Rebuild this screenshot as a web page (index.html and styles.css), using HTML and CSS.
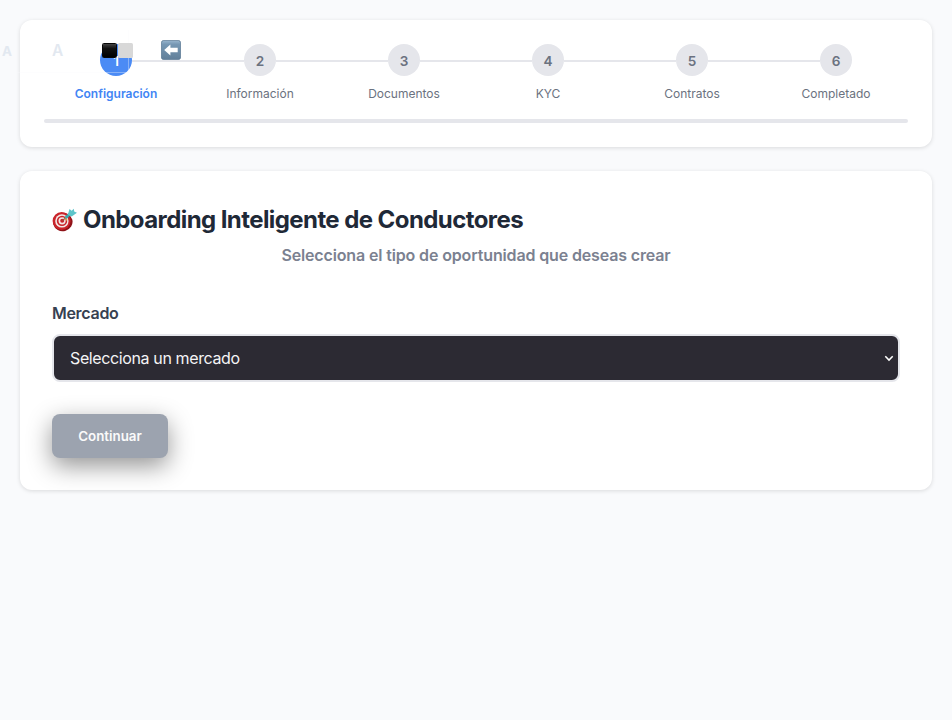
FILE: index.html
```html
<!DOCTYPE html>
<html lang="es">
<head>
<meta charset="utf-8">
<title>Onboarding Inteligente de Conductores</title>
<link rel="stylesheet" href="styles.css">
</head>
<body>
<main class="page">
  <section class="card progress">
    <ol class="steps">
      <li class="step active"><span class="circle">1</span><span class="label">Configuración</span></li>
      <li class="step"><span class="circle">2</span><span class="label">Información</span></li>
      <li class="step"><span class="circle">3</span><span class="label">Documentos</span></li>
      <li class="step"><span class="circle">4</span><span class="label">KYC</span></li>
      <li class="step"><span class="circle">5</span><span class="label">Contratos</span></li>
      <li class="step"><span class="circle">6</span><span class="label">Completado</span></li>
    </ol>
    <div class="track"></div>
  </section>
  <section class="card form">
    <h1 class="title">
      <svg class="target" viewBox="0 0 25 24" aria-hidden="true">
        <ellipse cx="10.8" cy="14" rx="9.8" ry="9.2" fill="#8f1218" transform="rotate(-15 10.8 14)"/>
        <circle cx="9.6" cy="13" r="9" fill="#c9242a"/>
        <circle cx="9.9" cy="12.9" r="6.7" fill="#f3e9e6"/>
        <circle cx="10" cy="12.9" r="5.2" fill="#c9242a"/>
        <circle cx="10.1" cy="12.8" r="3.6" fill="#f3e9e6"/>
        <circle cx="10.2" cy="12.8" r="2" fill="#c9242a"/>
        <path d="M10.5 12.5 14 9.6" stroke="#8b5d45" stroke-width="1.2"/>
        <path d="M13.5 10 19 5" stroke="#3aa9b1" stroke-width="3"/>
        <path d="M15.8 6.8 17.5 1l2.2 1.8L21.8.8l.4 2.8 2.8 1.2-5.3 3.6Z" fill="#5dc5ca"/>
        <path d="m13 9.3 2.5 2.5-1.3 1.2Z" fill="#dba83c"/>
      </svg><span class="title-text">Onboarding Inteligente de Conductores</span>
    </h1>
    <p class="subtitle">Selecciona el tipo de oportunidad que deseas crear</p>
    <label class="field-label" for="market">Mercado</label>
    <div class="select-wrap">
      <select class="select" id="market"><option>Selecciona un mercado</option></select>
      <svg class="chevron" viewBox="0 0 10 7" aria-hidden="true"><path d="m1.3 1.2 3.7 3.9 3.7-3.9"/></svg>
    </div>
    <button class="continue" type="button">Continuar</button>
  </section>
</main>
<div class="ghost-panel"></div>
<span class="ghost ghost-edge">A</span>
<span class="ghost ghost-inner">A</span>
<span class="tile tile-black"></span>
<span class="tile tile-gray"></span>
<svg class="back" viewBox="0 0 20 20" aria-hidden="true">
  <defs><linearGradient id="back-fill" x1="0" y1="0" x2="0" y2="1"><stop offset="0" stop-color="#9ab7cf"/><stop offset=".2" stop-color="#7798b4"/><stop offset="1" stop-color="#617f99"/></linearGradient></defs>
  <rect x=".4" y=".4" width="19.2" height="19.2" rx="2.4" fill="url(#back-fill)" stroke="#5d7b95" stroke-width=".8"/>
  <path d="M3.2 10 9.4 4.5V7.8h7.3v4.4H9.4v3.3Z" fill="#fff"/>
</svg>
</body>
</html>
```
FILE: styles.css
```css
* {
  box-sizing: border-box;
}

body {
  margin: 0;
  min-height: 720px;
  position: relative;
  background: #f9fafc;
  color: #1f2937;
  font-family: Inter, "Liberation Sans", sans-serif;
  overflow: hidden;
}

.page {
  display: flex;
  flex-direction: column;
  gap: 24px;
  padding: 20px;
}

.card {
  background: #fff;
  border-radius: 12px;
  box-shadow: 0 1px 4px rgba(0, 0, 0, 0.13);
}

.progress {
  height: 127px;
  padding: 24px;
}

.steps {
  display: flex;
  list-style: none;
  margin: 0 0 16px;
  padding: 0;
}

.step {
  flex: 1;
  position: relative;
  display: flex;
  flex-direction: column;
  align-items: center;
  gap: 9px;
  color: #6b7280;
}

.step:not(:last-child)::after {
  content: "";
  position: absolute;
  top: 16px;
  left: calc(50% + 16px);
  width: calc(100% - 32px);
  height: 2px;
  background: #e5e6eb;
}

.circle {
  width: 32px;
  height: 32px;
  border-radius: 50%;
  display: grid;
  place-items: center;
  padding-top: 2px;
  background: #e5e6eb;
  font-size: 13.6px;
  font-weight: 600;
  line-height: 20px;
}

.label {
  font-size: 12px;
  line-height: 18px;
}

.active .circle {
  background: #4b8bf5;
  color: #fff;
}

.active .label {
  color: #4285f4;
  font-weight: 600;
}

.track {
  height: 4px;
  border-radius: 2px;
  background: #e5e6eb;
}

.form {
  height: 319px;
  padding: 32px;
}

.title {
  display: flex;
  align-items: center;
  gap: 6px;
  height: 34px;
  margin: 0 0 6px;
  font-size: 24px;
  font-weight: 700;
  line-height: 34px;
}

.title-text {
  letter-spacing: -0.58px;
}

.target {
  width: 25px;
  height: 24px;
  flex: none;
}

.subtitle {
  margin: 0 0 34px;
  color: #7b8190;
  font-size: 16px;
  font-weight: 600;
  letter-spacing: -0.14px;
  line-height: 24px;
  text-align: center;
}

.field-label {
  display: block;
  margin-bottom: 9px;
  color: #374151;
  font-size: 16px;
  font-weight: 600;
  letter-spacing: -0.3px;
  line-height: 24px;
}

.select-wrap {
  position: relative;
  height: 48px;
  margin-bottom: 32px;
}

.select {
  width: 100%;
  height: 48px;
  appearance: none;
  padding: 0 16px;
  border: 2px solid #e5e6eb;
  border-radius: 8px;
  background: #2c2a33;
  color: #f4f4f6;
  font: 400 16px/24px Inter, "Liberation Sans", sans-serif;
  letter-spacing: -0.38px;
}

.chevron {
  position: absolute;
  top: 21px;
  right: 6px;
  width: 10px;
  height: 7px;
  fill: none;
  stroke: #fff;
  stroke-width: 1.5;
}

.continue {
  display: block;
  width: 116px;
  height: 44px;
  padding: 0;
  border: 0;
  border-radius: 8px;
  background: #9ca3af;
  color: #fafafa;
  font: 600 13.333px/20px Inter, "Liberation Sans", sans-serif;
  box-shadow: 0 8px 24px rgba(0, 0, 0, 0.42);
}

.ghost-panel {
  position: absolute;
  left: 17px;
  top: 30px;
  width: 112px;
  height: 43px;
  border: solid rgba(249, 250, 252, 0.35);
  border-width: 0 1px 1px 0;
}

.ghost {
  position: absolute;
  color: #e2e8f0;
  font-weight: 700;
  line-height: 20px;
}

.ghost-edge {
  left: 2px;
  top: 41px;
  font-size: 13.333px;
}

.ghost-inner {
  left: 52px;
  top: 41px;
  font-size: 15.5px;
  font-weight: 600;
}

.tile {
  position: absolute;
  top: 43px;
  width: 15px;
  height: 15px;
  border-radius: 1.5px;
}

.tile-black {
  left: 102px;
  background: linear-gradient(#444, #111 35%, #000);
  border: 1px solid #080808;
}

.tile-gray {
  left: 118px;
  background: #d8d8d8;
}

.back {
  position: absolute;
  left: 161px;
  top: 40px;
  width: 20px;
  height: 20px;
}
```
